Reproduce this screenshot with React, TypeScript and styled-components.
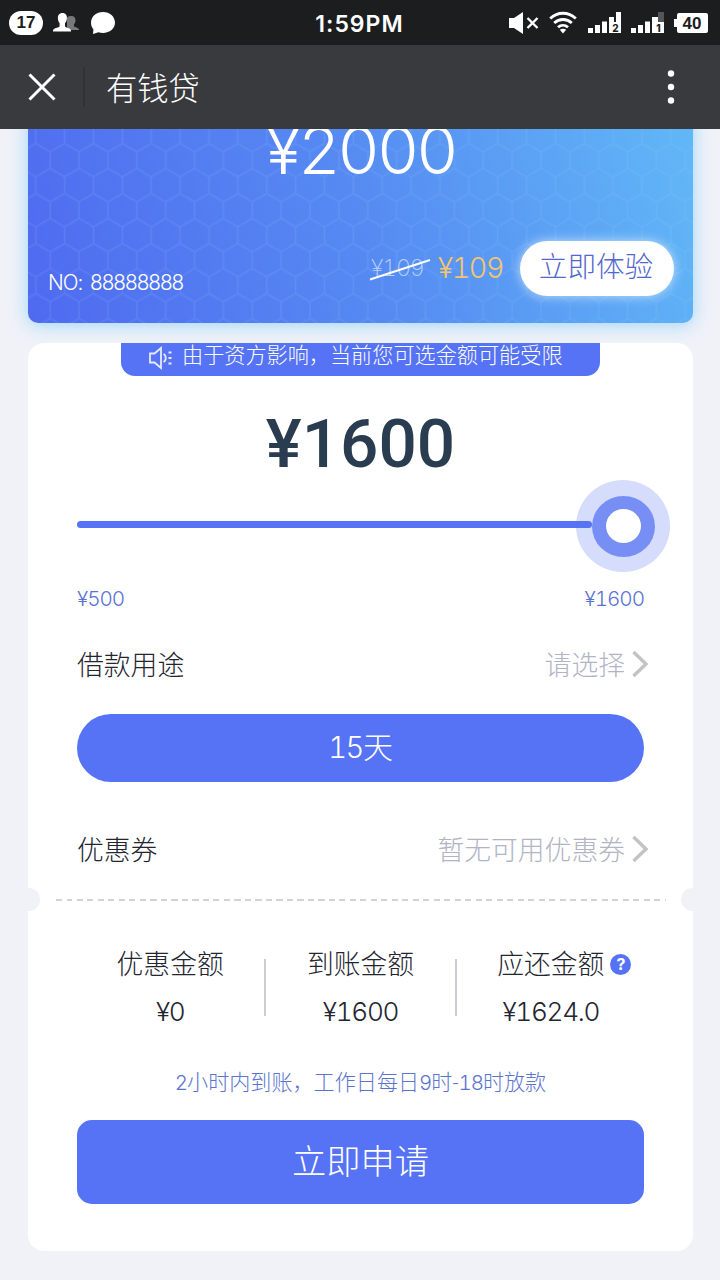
import React from "react";
import styled, { createGlobalStyle } from "styled-components";

const BLUE = "#5673f5";
const FONT = `Roboto, "Noto Sans CJK SC", sans-serif`;

const GlobalStyle = createGlobalStyle`
  * { box-sizing: border-box; }
  body { margin: 0; background: #f0f2f9; font-family: ${FONT}; }
  button { font: inherit; border: 0; padding: 0; margin: 0; }
`;

const Screen = styled.div`
  width: 720px;
  height: 1280px;
  display: flex;
  flex-direction: column;
  overflow: hidden;
  background: #f0f2f8;
  font-weight: 300;
  white-space: nowrap;
`;

const StatusBar = styled.header`
  flex: none;
  height: 45px;
  display: grid;
  grid-template-columns: 1fr auto 1fr;
  align-items: center;
  padding: 0 12px 0 9px;
  background: #1c1d1f;
  color: #fff;
`;

const StatusGroup = styled.div<{ $end?: boolean }>`
  display: flex;
  align-items: center;
  justify-content: ${(p) => (p.$end ? "flex-end" : "flex-start")};
  gap: ${(p) => (p.$end ? 0 : 10)}px;
`;

const CountBadge = styled.span`
  width: 34px;
  height: 24px;
  border-radius: 12px;
  background: #fff;
  color: #1c1d1f;
  font: 700 17px/24px "Liberation Sans", sans-serif;
  text-align: center;
`;

const Clock = styled.time`
  padding: 3px 0 0 2px;
  font: 600 23px/42px Inter, sans-serif;
  letter-spacing: 1px;
`;

const TitleBar = styled.nav`
  flex: none;
  height: 84px;
  display: flex;
  align-items: center;
  padding: 0 44px 0 28px;
  background: #393a3e;
  color: #fff;
`;

const TitleDivider = styled.i`
  width: 2px;
  height: 40px;
  margin: 0 21px 0 27px;
  background: #323337;
`;

const Title = styled.h1`
  flex: 1;
  margin: 0;
  padding-top: 5px;
  font-size: 31.3px;
  line-height: 79px;
  font-weight: 300;
`;

const Content = styled.main`
  flex: 1;
  min-height: 0;
  padding: 0 27px 0 28px;
  overflow: hidden;
`;

const Digits = styled.span<{ $proportional?: boolean }>`
  font-family: Inter, sans-serif;
  font-size: 0.97em;
  font-feature-settings: "tnum" ${(p) => (p.$proportional ? 0 : 1)};
  letter-spacing: -0.05em;
  word-spacing: ${(p) => (p.$proportional ? 3 : 0)}px;
`;

const PromoCard = styled.section`
  position: relative;
  height: 254px;
  margin-top: -60px;
  border-radius: 10px;
  display: flex;
  flex-direction: column;
  justify-content: space-between;
  background: linear-gradient(73deg, #4f6af0 0%, #568bf2 50%, #61baf7 100%);
  box-shadow: 0 2px 18px rgba(130, 205, 250, 0.75);
  color: #fff;
`;

const HexTexture = styled.svg`
  position: absolute;
  inset: 0;
  width: 100%;
  height: 100%;
`;

const PromoAmount = styled.div`
  position: relative;
  margin-top: 42px;
  font-size: 68px;
  line-height: 78px;
  font-weight: 300;
  text-align: center;
`;

const PromoFooter = styled.div`
  position: relative;
  display: flex;
  align-items: center;
  height: 56px;
  margin: 0 19px 27px 20px;
`;

const CardNumber = styled.span`
  flex: 1;
  padding-top: 30px;
  font-size: 21.4px;
  line-height: 24px;
`;

const OldPrice = styled.span`
  position: relative;
  margin-right: 14px;
  font-size: 24px;
  line-height: 28px;
  font-weight: 200;
  color: rgba(255, 255, 255, 0.6);
`;

const Strike = styled.svg`
  position: absolute;
  left: -2px;
  top: 5px;
`;

const NewPrice = styled.span`
  margin-right: 17px;
  font-size: 29.5px;
  line-height: 34px;
  color: #f3c56e;
`;

const TryButton = styled.button`
  width: 154px;
  height: 55px;
  border-radius: 28px;
  background: #fff;
  box-shadow: 0 0 12px rgba(255, 255, 255, 0.65);
  color: #5468cc;
  font-size: 28.6px;
  line-height: 52px;
  padding: 0 2px 3px 0;
`;

const LoanCard = styled.section`
  height: 908px;
  margin-top: 20px;
  border-radius: 16px;
  background: #fff;
  display: flex;
  flex-direction: column;
`;

const Notice = styled.div`
  align-self: center;
  width: 479px;
  height: 33px;
  display: flex;
  padding-left: 27px;
  border-radius: 0 0 14px 14px;
  background: ${BLUE};
  color: #fff;
  font-size: 21.15px;
  line-height: 26px;
  svg { margin: 3px 8px 0 0; }
`;

const LoanAmount = styled.div`
  margin-top: 29px;
  font-size: 67.5px;
  line-height: 78px;
  font-weight: 500;
  color: #2a3c4f;
  text-align: center;
`;

const Body = styled.div`
  display: flex;
  flex-direction: column;
  padding: 0 49px;
`;

const Slider = styled.div`
  display: flex;
  align-items: center;
  height: 92px;
  margin: -3px -26px 0 0;
`;

const Track = styled.div`
  flex: 1;
  height: 7px;
  margin: -3px -16px 0 0;
  border-radius: 4px;
  background: ${BLUE};
`;

const Ring = styled.div<{ $w: number; $h: number; $color: string }>`
  width: ${(p) => p.$w}px;
  height: ${(p) => p.$h}px;
  border-radius: 50%;
  background: ${(p) => p.$color};
  display: flex;
  align-items: center;
  justify-content: center;
`;

const Range = styled.div`
  display: flex;
  justify-content: space-between;
  margin-top: 15px;
  font-size: 21.3px;
  line-height: 24px;
  color: #5b74d4;
`;

const Row = styled.div<{ $top: number }>`
  display: flex;
  align-items: center;
  height: 40px;
  margin: ${(p) => p.$top}px -5px 0 0;
  font-size: 26.8px;
  line-height: 36px;
  color: #23252f;
  svg { margin-left: 7px; }
`;

const RowText = styled.span`
  padding-top: 4px;
`;

const RowValue = styled(RowText)`
  margin-left: auto;
  color: #b1b4c4;
`;

const Term = styled.button`
  height: 68px;
  margin-top: 30px;
  border-radius: 34px;
  background: ${BLUE};
  color: #fff;
  font-size: 30px;
  line-height: 66px;
`;

const TearLine = styled.div`
  display: flex;
  align-items: center;
  justify-content: space-between;
  height: 23px;
  margin-top: 19px;
`;

const Notch = styled.i<{ $right?: boolean }>`
  width: 12px;
  height: 23px;
  background: #f1f2f8;
  border-radius: ${(p) => (p.$right ? "12px 0 0 12px" : "0 12px 12px 0")};
`;

const Dashes = styled.i`
  width: 610px;
  height: 2px;
  margin-left: 1px;
  background: repeating-linear-gradient(90deg, #d3d3d6 0 6px, transparent 6px 10.5px);
`;

const Stats = styled.div`
  display: flex;
  height: 90px;
  margin: 33px 48px 0;
`;

const Stat = styled.div`
  flex: 1;
  display: flex;
  flex-direction: column;
  align-items: center;
  padding-top: 3px;
  font-size: 26.8px;
  line-height: 36px;
  color: #23252f;
`;

const StatLabel = styled.div`
  position: relative;
`;

const StatValue = styled.div`
  margin-top: 11px;
  font-size: 27px;
`;

const StatDivider = styled.i`
  width: 2px;
  height: 57px;
  margin-top: 15px;
  background: #cbccd4;
`;

const Help = styled.span`
  position: absolute;
  left: calc(100% + 6px);
  top: 7px;
  width: 21px;
  height: 21px;
  border-radius: 50%;
  background: ${BLUE};
  color: #fff;
  font: 700 16px/21px Inter, sans-serif;
  text-align: center;
`;

const Hint = styled.p`
  margin: 35px 0 0;
  font-size: 21.1px;
  line-height: 28px;
  color: #5b74cf;
  text-align: center;
`;

const Apply = styled.button`
  height: 84px;
  margin-top: 23px;
  border-radius: 15px;
  background: ${BLUE};
  color: #fff;
  font-size: 34.3px;
  line-height: 84px;
`;

const Chevron = () => (
  <svg width="17" height="28" viewBox="0 0 17 28" fill="none" stroke="#c3c3c6" strokeWidth="3.4">
    <path d="M1.5 2 14 14 1.5 26" />
  </svg>
);

const Signal = ({ digit, weak }: { digit: string; weak?: boolean }) => (
  <svg width="33" height="24" viewBox="0 0 33 24" fill="#fff">
    <path d="M0 17h5v5H0zM7 14h5v8H7zM14 10.500h5V22h-5z" />
    {weak ? (
      <>
        <path d="M21 6h6v5h6v11H21z" />
        <path d="M27 1h6v10h-6z" fill="#555659" />
      </>
    ) : (
      <path d="M21 6h5v5h2V1h5v21H21z" />
    )}
    <text x="27.500" y="20.500" fontSize="10" fontWeight="800" fontFamily="Inter" textAnchor="middle" fill="#1c1d1f">
      {digit}
    </text>
  </svg>
);

export default function App() {
  return (
    <>
      <GlobalStyle />
      <Screen>
        <StatusBar>
          <StatusGroup>
            <CountBadge>17</CountBadge>
            <svg width="26" height="20" viewBox="0 0 26 20">
              <path fill="#77787a" d="M18.500 3c2.600 0 4.200 1.800 4 4.500-.1 1.700-.6 2.900-1.500 3.800v2c1 1.300 4.500 1.200 5 3.200V17H14V4.500C15.200 3.400 16.800 3 18.500 3z" />
              <path fill="#fff" d="M9.500 0c3 0 4.600 2.200 4.400 5.200-.1 2.300-.7 3.700-1.900 4.900v3.500c1.200 1.500 5.600 1.400 6 4v.8H0v-.8c.4-2.600 5-2.500 6.600-4v-3.500C5.500 8.900 5 7.500 4.900 5.200 4.700 2.200 6.500 0 9.500 0z" />
            </svg>
            <svg width="26" height="24" viewBox="-1 0 26 24" fill="#fff">
              <path d="M13 1c6.800 0 12 4.600 12 10.600S19.800 22 13 22c-1.600 0-3.200-.2-4.600-.8L3 23l.4-4.600C1.800 16.600 1 14.200 1 11.600 1 5.600 6.200 1 13 1z" />
            </svg>
          </StatusGroup>
          <Clock>1:59PM</Clock>
          <StatusGroup $end>
            <svg width="30" height="24" viewBox="0 0 30 24" fill="#fff">
              <path d="M0 7h5l9-6v22l-9-6H0z" />
              <path d="m18.500 7 10 10m0-10-10 10" stroke="#fff" strokeWidth="2.400" />
            </svg>
            <svg width="28" height="24" viewBox="0 0 28 24" fill="none" stroke="#fff" strokeWidth="2.800" style={{ margin: "0 11px 0 10px" }}>
              <path d="M1.200 7.500c7.400-7 18.200-7 25.600 0M5.200 12c5-4.700 12.600-4.700 17.600 0M9 16.300c3-2.700 7-2.700 10 0" />
              <path d="M10.800 18.800c2-1.500 4.400-1.500 6.400 0L14 22.500z" fill="#fff" stroke="none" />
            </svg>
            <Signal digit="2" />
            <svg width="10" height="1" />
            <Signal digit="1" weak />
            <svg width="34" height="20" viewBox="0 0 34 20" style={{ marginLeft: 10 }}>
              <path d="M5 0h27a2 2 0 0 1 2 2v16a2 2 0 0 1-2 2H5a2 2 0 0 1-2-2v-4H0V6h3V2a2 2 0 0 1 2-2z" fill="#fff" />
              <text x="18" y="16" fontSize="17" fontWeight="700" fontFamily="Liberation Sans" textAnchor="middle" fill="#1c1d1f">40</text>
            </svg>
          </StatusGroup>
        </StatusBar>
        <TitleBar>
          <svg width="28" height="28" viewBox="0 0 28 28" stroke="#fff" strokeWidth="3">
            <path d="m1.500 1.500 25 25m0-25-25 25" />
          </svg>
          <TitleDivider />
          <Title>有钱贷</Title>
          <svg width="10" height="34" viewBox="0 0 10 34" fill="#fff">
            <circle cx="5" cy="3.500" r="3.200" />
            <circle cx="5" cy="17" r="3.200" />
            <circle cx="5" cy="30.500" r="3.200" />
          </svg>
        </TitleBar>
        <Content>
          <PromoCard>
            <HexTexture>
              <defs>
                <pattern id="hex" x="22.200" y="74.500" width="28.870" height="50" patternUnits="userSpaceOnUse">
                  <path
                    d="M0 8.330 14.430 0l14.440 8.330V25L14.430 33.330 0 25zM14.430 33.330V50"
                    fill="none"
                    stroke="#9fd0ff"
                    strokeOpacity=".14"
                    strokeWidth="1.500"
                  />
                </pattern>
              </defs>
              <rect width="100%" height="100%" fill="url(#hex)" />
            </HexTexture>
            <PromoAmount><Digits>¥2000</Digits></PromoAmount>
            <PromoFooter>
              <CardNumber><Digits $proportional>NO: 88888888</Digits></CardNumber>
              <OldPrice>
                <Digits>¥109</Digits>
                <Strike width="62" height="22" viewBox="0 0 62 22">
                  <path d="M1 20.500 61 1" stroke="#fff" strokeWidth="2" />
                </Strike>
              </OldPrice>
              <NewPrice><Digits>¥109</Digits></NewPrice>
              <TryButton>立即体验</TryButton>
            </PromoFooter>
          </PromoCard>
          <LoanCard>
            <Notice>
              <svg width="26" height="24" viewBox="0 0 26 24" fill="none" stroke="#fff" strokeWidth="1.800" opacity=".85">
                <path d="M2 7.500h4.500L13 2v20l-6.500-5.500H2z" />
                <path d="M15.500 8c3 1.500 3 6.500 0 8M20.500 6.500h3M20.500 12h3M20.500 17.500h3" />
              </svg>
              <span>由于资方影响，当前您可选金额可能受限</span>
            </Notice>
            <LoanAmount>¥1600</LoanAmount>
            <Body>
              <Slider>
                <Track />
                <Ring $w={94} $h={92} $color="rgba(86,115,245,.25)">
                  <Ring $w={63} $h={61} $color="#778ff5">
                    <Ring $w={35} $h={34} $color="#fff" />
                  </Ring>
                </Ring>
              </Slider>
              <Range>
                <Digits>¥500</Digits>
                <Digits>¥1600</Digits>
              </Range>
              <Row $top={33}>
                <RowText>借款用途</RowText>
                <RowValue>请选择</RowValue>
                <Chevron />
              </Row>
              <Term><Digits>15</Digits>天</Term>
              <Row $top={47}>
                <RowText>优惠券</RowText>
                <RowValue>暂无可用优惠券</RowValue>
                <Chevron />
              </Row>
            </Body>
            <TearLine>
              <Notch />
              <Dashes />
              <Notch $right />
            </TearLine>
            <Stats>
              <Stat>
                <StatLabel>优惠金额</StatLabel>
                <StatValue><Digits>¥0</Digits></StatValue>
              </Stat>
              <StatDivider />
              <Stat>
                <StatLabel>到账金额</StatLabel>
                <StatValue><Digits>¥1600</Digits></StatValue>
              </Stat>
              <StatDivider />
              <Stat>
                <StatLabel>
                  应还金额<Help>?</Help>
                </StatLabel>
                <StatValue><Digits>¥1624.0</Digits></StatValue>
              </Stat>
            </Stats>
            <Body>
              <Hint>
                <Digits>2</Digits>小时内到账，工作日每日<Digits>9</Digits>时-<Digits>18</Digits>时放款
              </Hint>
              <Apply>立即申请</Apply>
            </Body>
          </LoanCard>
        </Content>
      </Screen>
    </>
  );
}
